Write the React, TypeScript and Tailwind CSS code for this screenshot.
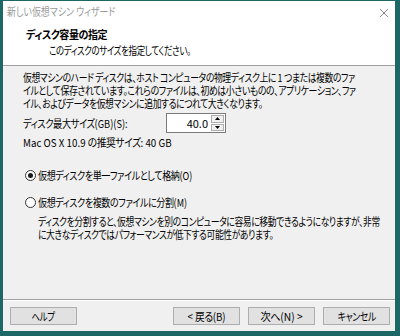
import { useLayoutEffect, useRef, useState } from "react";
import type { ReactNode } from "react";
import clsx from "clsx";

// squeeze a line of text to the width it has in the dialog (Meiryo UI is narrower than Noto)
const Fit = ({ w, children, className }: { w: number; children: ReactNode; className?: string }) => {
  const ref = useRef<HTMLSpanElement>(null);
  const [s, setS] = useState(1);

  useLayoutEffect(() => {
    const measure = () => {
      const el = ref.current;
      if (el && el.offsetWidth > 0) setS(w / el.offsetWidth);
    };
    measure();
    document.fonts?.ready.then(measure);
  }, [w]);

  return (
    <span
      ref={ref}
      className={clsx("block w-max whitespace-nowrap", className ?? "origin-left")}
      style={{ transform: `scaleX(${s})` }}
    >
      {children}
    </span>
  );
};

const Button = ({ children, w }: { children: ReactNode; w: number }) => (
  <button
    type="button"
    className="flex h-[18px] w-[67px] items-center justify-center border border-[#adadad] bg-[#e1e1e1] leading-none text-black"
  >
    <Fit w={w} className="origin-center">
      {children}
    </Fit>
  </button>
);

const Radio = ({ checked, label, w }: { checked?: boolean; label: ReactNode; w: number }) => (
  <div className="flex h-[13px] items-center">
    <span className="ml-[22px] flex h-[11px] w-[11px] shrink-0 items-center justify-center rounded-full border border-[#333] bg-white">
      {checked && <span className="h-[5px] w-[5px] rounded-full bg-[#1a1a1a]" />}
    </span>
    <span className="ml-[2px]">
      <Fit w={w}>{label}</Fit>
    </span>
  </div>
);

export default function App() {
  return (
    <div className="h-[336px] w-[400px] overflow-hidden bg-[#1d6866] pb-[5px] pl-[3px] pr-[5px] pt-[1px] font-['Noto_Sans_CJK_JP',sans-serif] text-[11px] tracking-[-0.5px] text-black [font-feature-settings:'palt']">
      <div className="flex h-full flex-col overflow-hidden bg-[#f0f0f0]">
        {/* title bar + header */}
        <div className="bg-white">
          <div className="flex h-[21px] items-center justify-between pl-[4px] pr-[6px]">
            <span className="tracking-normal text-[#9a9a9a]">
              <Fit w={108}>新しい仮想マシン ウィザード</Fit>
            </span>
            <svg width="10" height="10" viewBox="0 0 10 10" className="mt-[2px]">
              <path d="M1 1 L9 9 M9 1 L1 9" stroke="#8a8a8a" strokeWidth="1" />
            </svg>
          </div>
          <div className="h-[43px] pl-[23px] pt-[4px]">
            <div className="h-[16px] font-bold leading-[16px]">
              <Fit w={81}>ディスク容量の指定</Fit>
            </div>
            <div className="pl-[23px] leading-[16px]">
              <Fit w={142}>このディスクのサイズを指定してください。</Fit>
            </div>
          </div>
        </div>
        <div className="h-px bg-[#a0a0a0]" />

        {/* body */}
        <div className="flex-1 pl-[20px] pt-[5px]">
          <div className="leading-[13px]">
            <Fit w={332}>
              仮想マシンのハード ディスクは、ホスト コンピュータの物理ディスク上に <span className="tracking-normal">1</span> つまたは複数のファ
            </Fit>
            <Fit w={333}>イルとして保存されています。これらのファイルは、初めは小さいものの、アプリケーション、ファ</Fit>
            <Fit w={240}>イル、およびデータを仮想マシンに追加するにつれて大きくなります。</Fit>
          </div>

          <div className="mt-[3px] flex h-[20px] items-center">
            <span className="w-[143px]">
              <Fit w={105}>
                ディスク最大サイズ<span className="tracking-normal">(GB)(S):</span>
              </Fit>
            </span>
            <div className="flex h-[20px] border border-[#7a7a7a] bg-white">
              <div className="flex w-[44px] items-center justify-end pr-[3px] tracking-normal">40.0</div>
              <div className="my-[1px] mr-[1px] flex w-[13px] flex-col gap-px">
                <div className="flex flex-1 items-center justify-center border border-[#adadad] bg-[#f0f0f0]">
                  <svg width="5" height="3" viewBox="0 0 5 3">
                    <path d="M0 3 L2.5 0 L5 3 Z" fill="#000" />
                  </svg>
                </div>
                <div className="flex flex-1 items-center justify-center border border-[#adadad] bg-[#f0f0f0]">
                  <svg width="5" height="3" viewBox="0 0 5 3">
                    <path d="M0 0 L5 0 L2.5 3 Z" fill="#000" />
                  </svg>
                </div>
              </div>
            </div>
          </div>

          <div className="mt-[3px] leading-[13px]">
            <Fit w={149}>
              <span className="tracking-normal">Mac OS X 10.9 </span>の推奨サイズ<span className="tracking-normal">: 40 GB</span>
            </Fit>
          </div>

          <div className="-ml-[20px] mt-[20px]">
            <Radio
              checked
              w={154}
              label={
                <>
                  仮想ディスクを単一ファイルとして格納<span className="tracking-normal">(O)</span>
                </>
              }
            />
          </div>
          <div className="-ml-[20px] mt-[14px]">
            <Radio
              w={149}
              label={
                <>
                  仮想ディスクを複数のファイルに分割<span className="tracking-normal">(M)</span>
                </>
              }
            />
          </div>
          <div className="ml-[15px] mt-[6px] leading-[13px]">
            <Fit w={342}>ディスクを分割すると、仮想マシンを別のコンピュータに容易に移動できるようになりますが、非常</Fit>
            <Fit w={235}>に大きなディスクではパフォーマンスが低下する可能性があります。</Fit>
          </div>
        </div>

        {/* footer */}
        <div className="border-t border-[#a0a0a0]">
          <div className="h-px bg-white" />
          <div className="flex items-center pb-[6px] pl-[7px] pr-[5px] pt-[6px]">
            <Button w={23}>ヘルプ</Button>
            <div className="ml-auto flex gap-[8px]">
              <Button w={38}>
                <span className="tracking-normal">&lt; </span>戻る<span className="tracking-normal">(B)</span>
              </Button>
              <Button w={42}>
                次へ<span className="tracking-normal">(N) &gt;</span>
              </Button>
              <Button w={38}>キャンセル</Button>
            </div>
          </div>
        </div>
      </div>
    </div>
  );
}
